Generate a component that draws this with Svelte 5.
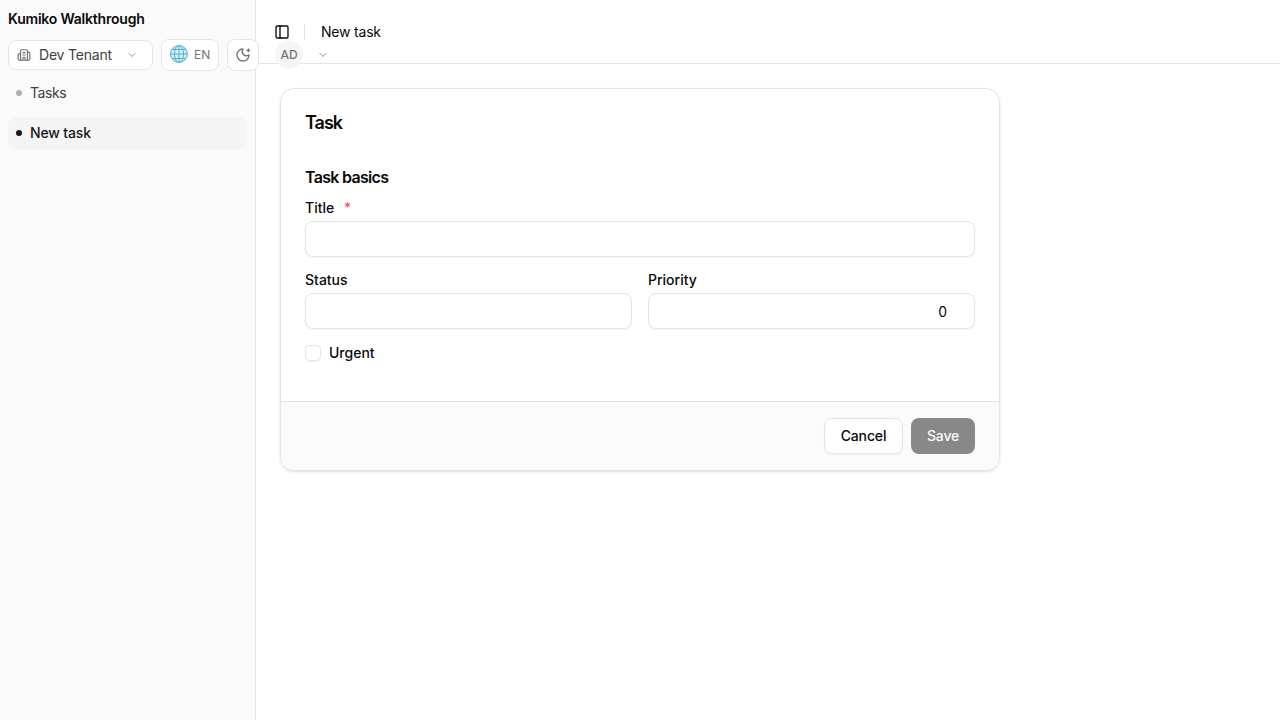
<script lang="ts">
  type NavItem = { label: string; active: boolean };

  const navItems: NavItem[] = [
    { label: 'Tasks', active: false },
    { label: 'New task', active: true },
  ];

  let title = '';
  let status = '';
  let priority = '0';
  let urgent = false;

  $: canSave = title.trim() !== '';
</script>

<div class="shell">
  <aside class="sidebar">
    <div class="brand">Kumiko Walkthrough</div>

    <div class="toolbar">
      <button class="control tenant">
        <svg class="icon" width="14" height="14" viewBox="0 0 24 24">
          <path d="M10 12h4M10 8h4M14 21v-3a2 2 0 0 0-4 0v3" />
          <path d="M6 10H4a2 2 0 0 0-2 2v7a2 2 0 0 0 2 2h16a2 2 0 0 0 2-2V9a2 2 0 0 0-2-2h-2" />
          <path d="M6 21V5a2 2 0 0 1 2-2h8a2 2 0 0 1 2 2v16" />
        </svg>
        <span class="tenant-name">Dev Tenant</span>
        <svg class="icon chevron" width="12" height="12" viewBox="0 0 24 24"><path d="m6 9 6 6 6-6" /></svg>
      </button>

      <button class="control lang">
        <svg class="globe" width="20" height="20" viewBox="0 0 20 20">
          <circle cx="10" cy="10" r="8.4" />
          <ellipse cx="10" cy="10" rx="4.5" ry="8.4" />
          <path d="M10 1.6v16.8M1.6 10h16.8M3.1 5.5h13.8M3.1 14.5h13.8" />
        </svg>
        <span>EN</span>
      </button>

      <button class="control theme" aria-label="Theme">
        <svg class="icon" width="16" height="16" viewBox="0 0 24 24">
          <path d="M18 5h4M20 3v4" />
          <path d="M20.985 12.486a9 9 0 1 1-9.473-9.472c.405-.022.617.46.402.803a6 6 0 0 0 8.268 8.268c.344-.215.825-.004.803.401" />
        </svg>
      </button>

      <button class="user">
        <span class="avatar">AD</span>
        <svg class="icon chevron" width="12" height="12" viewBox="0 0 24 24"><path d="m6 9 6 6 6-6" /></svg>
      </button>
    </div>

    <nav>
      {#each navItems as item}
        <a href="#nav" class:active={item.active}><i></i>{item.label}</a>
      {/each}
    </nav>
  </aside>

  <div class="content">
    <header>
      <button class="trigger" aria-label="Toggle sidebar">
        <svg class="icon" width="16" height="16" viewBox="0 0 24 24">
          <rect x="3" y="3" width="18" height="18" rx="2" />
          <path d="M9 3v18" />
        </svg>
      </button>
      <span class="separator"></span>
      <span class="crumb">New task</span>
    </header>

    <main>
      <form class="card">
        <div class="card-body">
          <h1>Task</h1>
          <h2>Task basics</h2>
          <div class="fields">
            <div class="field wide">
              <label for="title">Title <span class="required">*</span></label>
              <input id="title" bind:value={title} />
            </div>
            <div class="field">
              <label for="status">Status</label>
              <input id="status" bind:value={status} />
            </div>
            <div class="field">
              <label for="priority">Priority</label>
              <input id="priority" class="number" bind:value={priority} />
            </div>
            <label class="check wide">
              <input type="checkbox" bind:checked={urgent} />
              Urgent
            </label>
          </div>
        </div>
        <footer>
          <button type="button" class="btn">Cancel</button>
          <button type="submit" class="btn primary" disabled={!canSave}>Save</button>
        </footer>
      </form>
    </main>
  </div>
</div>

<style>
  :global(body) {
    background: #fff;
  }

  .shell {
    display: flex;
    height: 100vh;
    overflow: hidden;
    font-family: Inter, sans-serif;
    font-size: 14px;
    line-height: 20px;
    color: #0a0a0a;
  }

  .shell * {
    box-sizing: border-box;
  }

  button,
  input {
    font: inherit;
    color: inherit;
    margin: 0;
  }

  button {
    display: flex;
    align-items: center;
    flex-shrink: 0;
    padding: 0;
    border: 0;
    background: none;
  }

  .icon {
    flex-shrink: 0;
    fill: none;
    stroke: currentColor;
    stroke-width: 2;
    stroke-linecap: round;
    stroke-linejoin: round;
  }

  .sidebar {
    position: relative;
    z-index: 1;
    width: 256px;
    flex-shrink: 0;
    padding: 9px 8px;
    border-right: 1px solid #e5e5e5;
    background: #fafafa;
  }

  .brand {
    font-weight: 600;
    letter-spacing: -0.21px;
  }

  .toolbar {
    display: flex;
    align-items: center;
    gap: 8px;
    height: 32px;
    margin-top: 10px;
  }

  .control {
    border: 1px solid #e5e5e5;
    border-radius: 8px;
    background: #fff;
    color: #737373;
  }

  .tenant {
    width: 145px;
    height: 30px;
    padding: 0 8px;
    gap: 8px;
  }

  .tenant-name {
    color: #404040;
    letter-spacing: -0.2px;
  }

  .chevron {
    color: #8f8f8f;
  }

  .tenant .chevron {
    margin-left: auto;
    margin-right: 6px;
  }

  .lang {
    width: 58px;
    height: 32px;
    padding-left: 7px;
    gap: 5px;
    font-size: 12px;
  }

  .globe {
    margin-top: -2px;
    fill: #d6f1fa;
    stroke: #4fadd2;
    stroke-width: 1;
  }

  .theme {
    width: 32px;
    height: 32px;
    justify-content: center;
  }

  .user {
    padding-left: 8px;
    gap: 14px;
  }

  .avatar {
    width: 28px;
    height: 28px;
    border-radius: 50%;
    background: #f5f5f5;
    color: #737373;
    font-size: 12px;
    font-weight: 500;
    line-height: 28px;
    text-align: center;
    letter-spacing: -0.2px;
  }

  nav {
    display: grid;
    gap: 8px;
    margin-top: 6px;
  }

  nav a {
    display: flex;
    align-items: center;
    gap: 8px;
    height: 32px;
    padding: 0 8px;
    border-radius: 8px;
    color: #404040;
    letter-spacing: -0.4px;
    text-decoration: none;
  }

  nav i {
    width: 6px;
    height: 6px;
    border-radius: 50%;
    background: #b0b0b0;
  }

  nav a.active {
    background: #f5f5f5;
    color: #171717;
    font-weight: 500;
    letter-spacing: -0.15px;
  }

  nav a.active i {
    background: #171717;
  }

  .content {
    flex: 1;
  }

  header {
    display: flex;
    align-items: center;
    height: 64px;
    padding-left: 12px;
    border-bottom: 1px solid #e5e5e5;
  }

  .crumb {
    letter-spacing: -0.2px;
  }

  .trigger {
    width: 28px;
    height: 28px;
    justify-content: center;
  }

  .separator {
    width: 1px;
    height: 16px;
    margin: 0 16px 0 8px;
    background: #e5e5e5;
  }

  main {
    padding: 24px;
  }

  .card {
    width: 720px;
    border: 1px solid #e5e5e5;
    border-radius: 14px;
    box-shadow: 0 1px 3px rgb(0 0 0 / 10%), 0 1px 2px -1px rgb(0 0 0 / 10%);
    overflow: hidden;
  }

  .card-body {
    padding: 20px 24px 40px;
  }

  h1,
  h2 {
    margin: 0;
    font-weight: 600;
  }

  h1 {
    font-size: 18px;
    line-height: 28px;
    letter-spacing: -1px;
  }

  h2 {
    margin-top: 28px;
    font-size: 16px;
    line-height: 24px;
    letter-spacing: -0.7px;
  }

  .fields {
    display: grid;
    grid-template-columns: 1fr 1fr;
    gap: 16px;
    margin-top: 12px;
  }

  .wide {
    grid-column: 1 / -1;
  }

  .field {
    display: grid;
    gap: 6px;
  }

  label {
    font-weight: 500;
    line-height: 14px;
  }

  .required {
    margin-left: 6px;
    color: #ef4444;
    font-weight: 400;
  }

  .field input {
    width: 100%;
    height: 36px;
    padding: 0 12px;
    border: 1px solid #e5e5e5;
    border-radius: 8px;
    background: #fff;
    box-shadow: 0 1px 2px rgb(0 0 0 / 5%);
  }

  .field .number {
    padding-right: 27px;
    text-align: right;
  }

  .check {
    display: flex;
    align-items: center;
    gap: 8px;
  }

  .check input {
    appearance: none;
    width: 16px;
    height: 16px;
    border: 1px solid #e5e5e5;
    border-radius: 4px;
    box-shadow: 0 1px 2px rgb(0 0 0 / 5%);
  }

  .check input:checked {
    background: #171717;
  }

  footer {
    display: flex;
    justify-content: flex-end;
    gap: 8px;
    padding: 16px 24px;
    border-top: 1px solid #e5e5e5;
    background: #fbfbfb;
  }

  .btn {
    justify-content: center;
    width: 79px;
    height: 36px;
    border: 1px solid #e5e5e5;
    border-radius: 8px;
    background: #fff;
    box-shadow: 0 1px 2px rgb(0 0 0 / 5%);
    font-weight: 500;
    letter-spacing: -0.15px;
  }

  .primary {
    width: 64px;
    border: 0;
    background: #171717;
    color: #fafafa;
    box-shadow: none;
  }

  .primary:disabled {
    opacity: 0.5;
  }
</style>
